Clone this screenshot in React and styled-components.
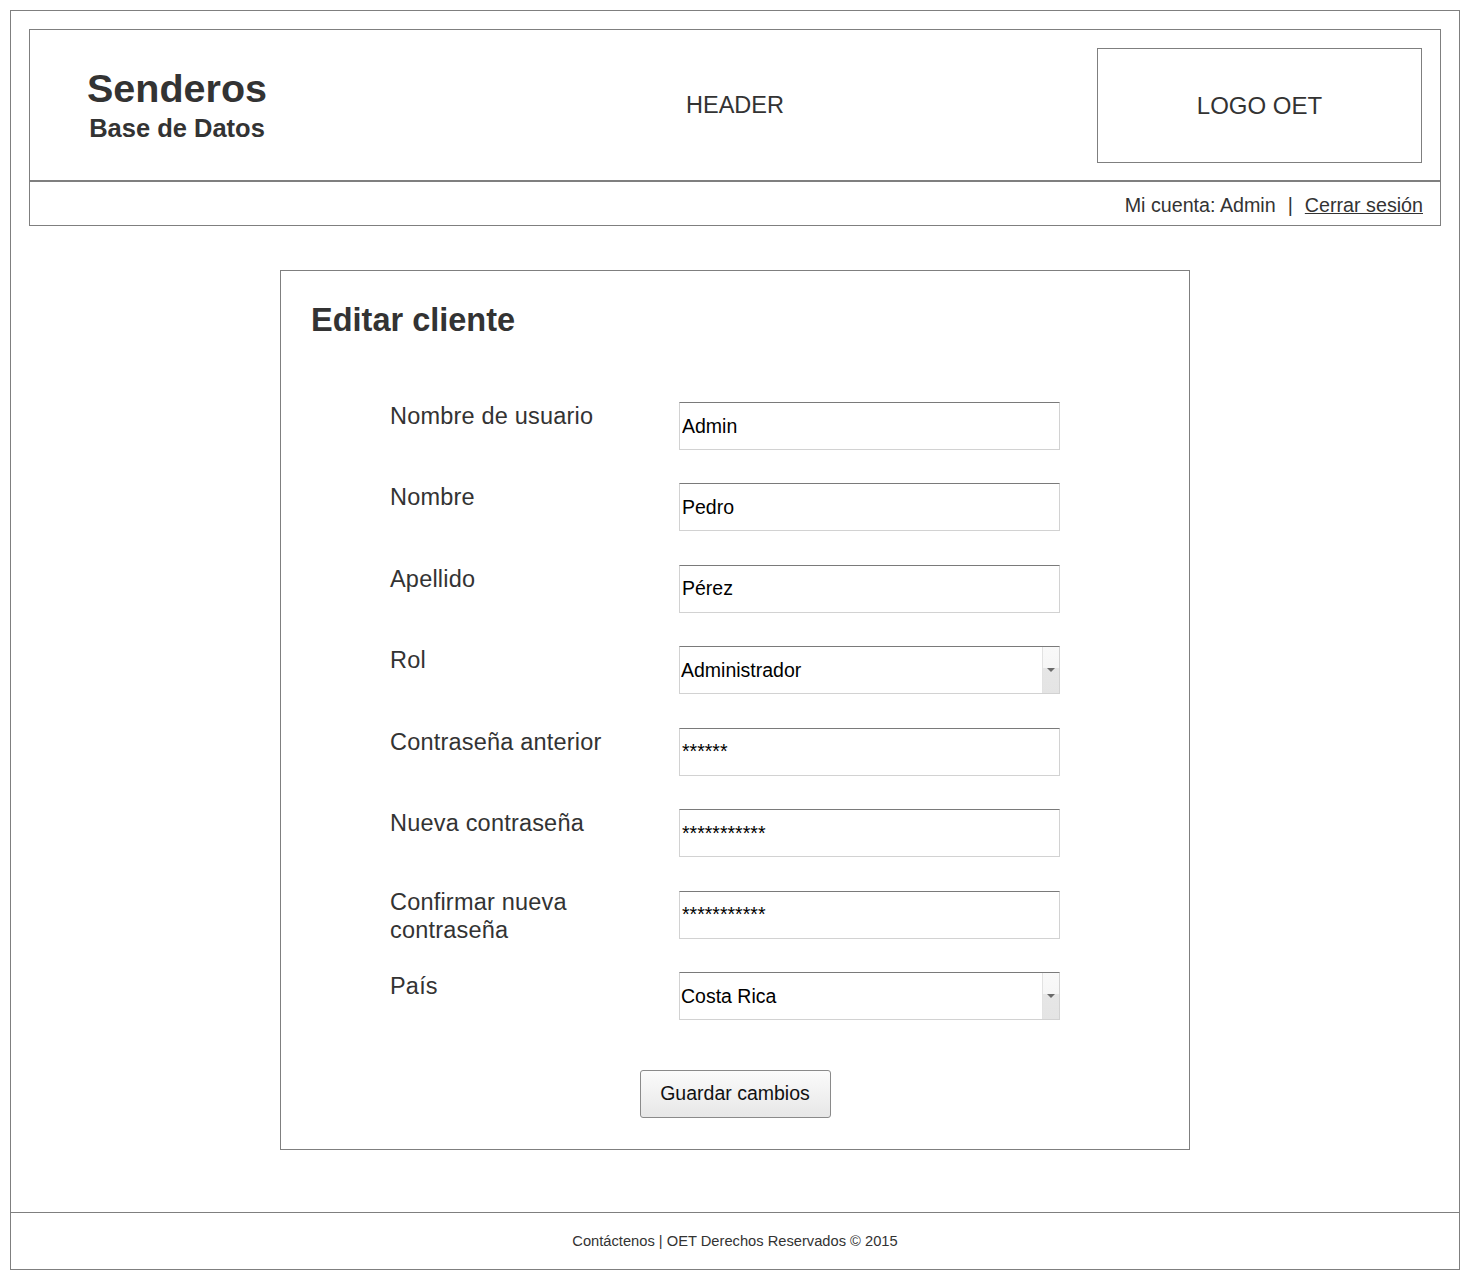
import styled, { createGlobalStyle } from "styled-components";

const GlobalStyle = createGlobalStyle`
  body {
    margin: 0;
    background: #fff;
    font-family: "Liberation Sans", Arial, sans-serif;
    color: #333;
  }
`;

const fields = [
  { label: "Nombre de usuario", value: "Admin" },
  { label: "Nombre", value: "Pedro" },
  { label: "Apellido", value: "Pérez" },
  { label: "Rol", value: "Administrador", select: true },
  { label: "Contraseña anterior", value: "******" },
  { label: "Nueva contraseña", value: "***********" },
  { label: "Confirmar nueva contraseña", value: "***********", tight: true },
  { label: "País", value: "Costa Rica", select: true },
];

export default function App() {
  return (
    <>
      <GlobalStyle />
      <Frame>
        <Header>
          <HeaderTop>
            <Brand>
              <BrandName>Senderos</BrandName>
              <BrandSub>Base de Datos</BrandSub>
            </Brand>
            <HeaderTitle>HEADER</HeaderTitle>
            <LogoCell>
              <LogoBox>LOGO OET</LogoBox>
            </LogoCell>
          </HeaderTop>
          <NavBar>
            <span>Mi cuenta: Admin</span>
            <Sep>|</Sep>
            <NavLink href="#">Cerrar sesión</NavLink>
          </NavBar>
        </Header>

        <Main>
          <Card>
            <Title>Editar cliente</Title>
            <Form>
              {fields.map((f) => (
                <Row key={f.label}>
                  <Label $tight={f.tight}>
                    {f.tight ? (
                      <>
                        Confirmar nueva
                        <br />
                        contraseña
                      </>
                    ) : (
                      f.label
                    )}
                  </Label>
                  {f.select ? (
                    <SelectBox>
                      <Select defaultValue={f.value}>
                        <option>{f.value}</option>
                      </Select>
                      <ArrowZone>
                        <Arrow />
                      </ArrowZone>
                    </SelectBox>
                  ) : (
                    <Input type="text" defaultValue={f.value} readOnly />
                  )}
                </Row>
              ))}
            </Form>
            <Actions>
              <SaveButton type="button">Guardar cambios</SaveButton>
            </Actions>
          </Card>
        </Main>

        <Footer>Contáctenos | OET Derechos Reservados © 2015</Footer>
      </Frame>
    </>
  );
}

const Frame = styled.div`
  margin: 10px 0 0 10px;
  width: 1450px;
  height: 1260px;
  box-sizing: border-box;
  border: 1px solid #7f7f7f;
  display: flex;
  flex-direction: column;
`;

const Header = styled.header`
  margin: 18px 18px 0;
  border: 1px solid #7f7f7f;
`;

const HeaderTop = styled.div`
  height: 150px;
  display: grid;
  grid-template-columns: 1fr auto 1fr;
  align-items: center;
  border-bottom: 2px solid #7f7f7f;
`;

const Brand = styled.div`
  justify-self: start;
  margin-left: 57px;
  text-align: center;
  font-weight: bold;
  color: #333;
`;

const BrandName = styled.div`
  font-size: 39.5px;
  line-height: 38px;
`;

const BrandSub = styled.div`
  font-size: 25.5px;
  line-height: 28px;
  margin-top: 7px;
`;

const HeaderTitle = styled.div`
  font-size: 23.5px;
  color: #333;
`;

const LogoCell = styled.div`
  justify-self: end;
  padding: 18px 18px 17px 0;
`;

const LogoBox = styled.div`
  width: 325px;
  height: 115px;
  box-sizing: border-box;
  border: 1px solid #7f7f7f;
  display: flex;
  align-items: center;
  justify-content: center;
  font-size: 24px;
  color: #333;
`;

const NavBar = styled.nav`
  height: 43px;
  box-sizing: border-box;
  padding: 3px 17px 0 0;
  display: flex;
  align-items: center;
  justify-content: flex-end;
  font-size: 19.7px;
  color: #333;
`;

const Sep = styled.span`
  margin: 0 12px;
`;

const NavLink = styled.a`
  color: #333;
  text-decoration: underline;
`;

const Main = styled.main`
  display: flex;
  justify-content: center;
  padding-top: 44px;
`;

const Card = styled.section`
  width: 910px;
  height: 880px;
  box-sizing: border-box;
  border: 1px solid #7f7f7f;
  padding: 30px 30px 0;
`;

const Title = styled.h1`
  margin: 0;
  font-size: 32.5px;
  line-height: 38px;
  font-weight: bold;
  color: #333;
`;

const Form = styled.div`
  margin: 63px 0 0 79px;
  display: flex;
  flex-direction: column;
  gap: 33.43px;
`;

const Row = styled.div`
  height: 48px;
  display: grid;
  grid-template-columns: 289px 381px;
  align-items: start;
`;

const Label = styled.label`
  font-size: 23.5px;
  letter-spacing: 0.2px;
  line-height: 28px;
  color: #333;
  margin-top: ${(p) => (p.$tight ? "-3px" : "0")};
`;

const fieldBox = `
  height: 48px;
  box-sizing: border-box;
  border: 1px solid #d2d2d2;
  border-top-color: #7a7a7a;
  background: #fff;
`;

const Input = styled.input`
  ${fieldBox}
  width: 381px;
  padding: 0 2px;
  font-family: "Liberation Sans", Arial, sans-serif;
  font-size: 19.5px;
  color: #000;
  outline: none;
`;

const SelectBox = styled.div`
  ${fieldBox}
  display: flex;
`;

const Select = styled.select`
  flex: 1;
  appearance: none;
  border: none;
  background: transparent;
  padding: 0 1px;
  font-family: "Liberation Sans", Arial, sans-serif;
  font-size: 19.5px;
  color: #000;
  outline: none;
`;

const ArrowZone = styled.div`
  width: 16px;
  border-left: 1px solid #e2e2e2;
  background: linear-gradient(#f9f9f9 0%, #f6f6f6 45%, #e6e6e6 45%, #e4e4e4 100%);
  display: flex;
  align-items: center;
  justify-content: center;
`;

const Arrow = styled.span`
  width: 0;
  height: 0;
  border-left: 4px solid transparent;
  border-right: 4px solid transparent;
  border-top: 4px solid #6a6a6a;
`;

const Actions = styled.div`
  display: flex;
  justify-content: center;
  margin-top: 50px;
`;

const SaveButton = styled.button`
  width: 191px;
  height: 48px;
  border: 1px solid #8a8a8a;
  border-radius: 3px;
  background: linear-gradient(#fbfbfb, #e7e7e7);
  font-family: "Liberation Sans", Arial, sans-serif;
  font-size: 19.5px;
  color: #111;
`;

const Footer = styled.footer`
  margin-top: auto;
  height: 57px;
  box-sizing: border-box;
  border-top: 1px solid #7f7f7f;
  display: flex;
  align-items: center;
  justify-content: center;
  font-size: 14.7px;
  color: #333;
`;
